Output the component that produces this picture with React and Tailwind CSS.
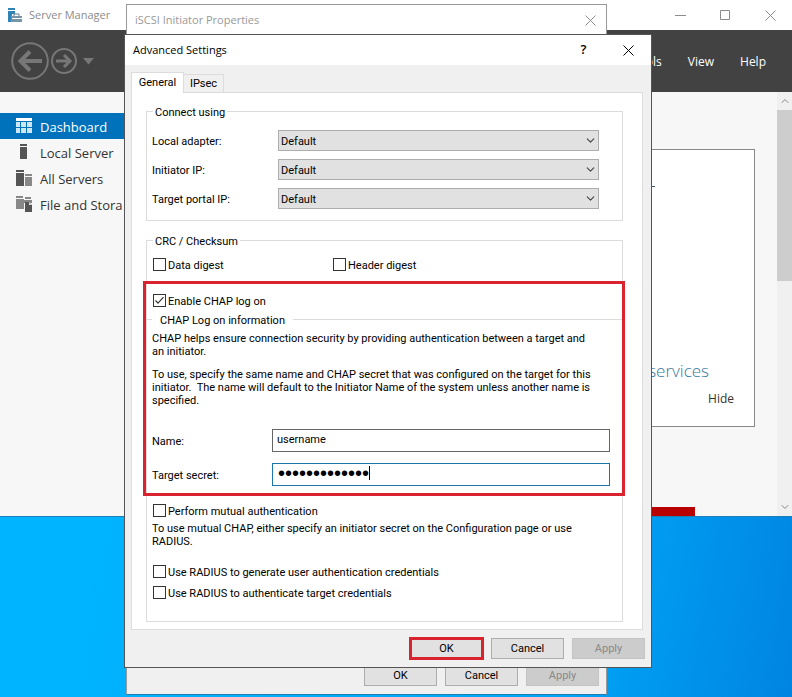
import { useState } from "react";
import { ChevronDown, ChevronUp } from "lucide-react";

// Server Manager navigation icons
const DashboardIcon = () => (
  <svg width="16" height="16" viewBox="0 0 16 16" aria-hidden="true">
    <path d="M0 0h16v3H0z" fill="#ffffff" />
    <path d="M0 4h4v5H0zM5 4h5v5H5zM11 4h5v5h-5zM0 10h4v5H0zM5 10h5v5H5zM11 10h5v5h-5z" fill="#cfe6f5" />
  </svg>
);

const LocalServerIcon = () => (
  <svg width="16" height="16" viewBox="0 0 16 16" fill="#555555" aria-hidden="true">
    <path d="M4 0h7v2H4zM4 3h7v12H4z" />
  </svg>
);

const AllServersIcon = () => (
  <svg width="16" height="16" viewBox="0 0 16 16" aria-hidden="true">
    <path d="M0 0h8v2H0zM0 3h8v13H0z" fill="#555555" />
    <path d="M9 4h7v2H9zM9 7h7v9H9z" fill="#888888" />
  </svg>
);

const StorageIcon = () => (
  <svg width="16" height="16" viewBox="0 0 16 16" aria-hidden="true">
    <path d="M0 0h7v2H0zM0 3h8v10H0zM9 1h6v2H9zM8 4h8v3H8z" fill="#888888" />
    <path d="M9 6h4l3 3v7H9z" fill="#555555" />
    <path d="M13 6v3h3z" fill="#dddddd" />
  </svg>
);

const ServerManagerIcon = () => (
  <svg width="15" height="15" viewBox="0 0 15 15" aria-hidden="true">
    <path d="M0 0h7v2H0zM0 3h7v3H4v8H0z" fill="#2f83b5" />
    <path d="M6 8V6h5v2" fill="none" stroke="#5d7f92" />
    <path d="M3 8h11v2H3zM3 11h11v3H3z" fill="#7795a6" />
  </svg>
);

const navItems = [
  { label: "Dashboard", icon: DashboardIcon, active: true },
  { label: "Local Server", icon: LocalServerIcon },
  { label: "All Servers", icon: AllServersIcon },
  { label: "File and Stora", icon: StorageIcon },
];

const adapters = [
  { id: "local-adapter", label: "Local adapter:" },
  { id: "initiator-ip", label: "Initiator IP:" },
  { id: "target-portal-ip", label: "Target portal IP:" },
];

const ServerManager = () => (
  <main className="w-full border-b border-[#1c7fb5] bg-[#f7f7f7] font-['Open_Sans',sans-serif]">
    {/* Title bar */}
    <header className="flex h-[30px] items-center justify-between bg-white pl-2 text-[#8c8c8c]">
      <div className="flex items-center gap-[6px] text-[11px]">
        <ServerManagerIcon />
        <span>Server Manager</span>
      </div>
      <div className="flex items-center">
        <button aria-label="Minimize" className="flex h-7 w-[45px] items-center justify-center">
          <svg width="11" height="11" stroke="#8c8c8c"><path d="M0 5.500h11" /></svg>
        </button>
        <button aria-label="Maximize" className="flex h-7 w-[45px] items-center justify-center">
          <svg width="11" height="11" fill="none" stroke="#8c8c8c"><path d="M.5.5h9v9h-9z" /></svg>
        </button>
        <button aria-label="Close" className="flex h-7 w-11 items-center justify-center">
          <svg width="11" height="11" stroke="#8c8c8c"><path d="M.5.5l10 10M10.500.5l-10 10" /></svg>
        </button>
      </div>
    </header>

    {/* Toolbar */}
    <div className="flex h-[62px] items-center justify-between bg-[#424242] pr-[26px] pl-[11px] text-white">
      <div className="flex items-center gap-[2px]">
        <button aria-label="Back">
          <svg width="38" height="38" viewBox="0 0 38 38" fill="none" stroke="#777777">
            <circle cx="19" cy="19" r="17.8" strokeWidth="2" />
            <path d="M9 19h22M19 9.500L9.500 19l9.500 9.500" strokeWidth="4" />
          </svg>
        </button>
        <button aria-label="Forward">
          <svg width="26" height="26" viewBox="0 0 26 26" fill="none" stroke="#777777">
            <circle cx="13" cy="13" r="12" strokeWidth="2" />
            <path d="M5 13h15M13 7l6 6-6 6" strokeWidth="3" />
          </svg>
        </button>
        <button aria-label="History" className="ml-1">
          <svg width="11" height="7" fill="#777777"><path d="M0 0h11L5.500 6.500z" /></svg>
        </button>
      </div>
      <nav className="flex gap-[26px] pt-[2px] text-[12px]">
        <button>Tools</button>
        <button>View</button>
        <button>Help</button>
      </nav>
    </div>

    <div className="flex">
      {/* Sidebar */}
      <nav className="w-[124px] shrink-0 pt-[21px] text-[13px] whitespace-nowrap">
        {navItems.map(({ label, icon: Icon, active }) => (
          <a
            key={label}
            href="#"
            className={`flex h-[26px] items-center gap-2 pl-4 ${
              active ? "bg-[#0072bc] text-white" : "text-[#333333]"
            }`}
          >
            <Icon />
            <span className="pt-px leading-5">{label}</span>
          </a>
        ))}
      </nav>

      {/* Dashboard */}
      <section className="flex flex-1 flex-col pt-[57px]">
        <div className="mr-[22px] flex h-[278px] flex-col items-end border border-[#888888] bg-white pt-9 pr-5 pb-[17px]">
          <div className="mr-[79px] h-px w-1 bg-[#3b5566]" />
          <a href="#" className="mt-auto mr-[25px] mb-[6px] text-[17px] leading-6 font-light text-[#3579a3]">services</a>
          <button className="text-[12px] leading-5 text-[#333333]">Hide</button>
        </div>
        <div className="mt-20 mr-[82px] h-[9px] bg-[#b80000]" />
      </section>

      {/* Scrollbar */}
      <div className="flex w-[15px] shrink-0 flex-col items-center bg-[#f0f0f0] text-[#888888]">
        <ChevronUp size={12} className="my-[3px]" />
        <div className="h-[171px] w-full bg-[#cdcdcd]" />
        <ChevronDown size={12} className="mt-auto mb-[3px]" />
      </div>
    </div>
  </main>
);

const DialogButton = ({ children, disabled, highlight }) => (
  <button
    disabled={disabled}
    className={`h-[21px] w-[73px] border pt-px text-[11px] leading-[18px] ${
      disabled ? "border-[#c4c4c4] bg-[#cccccc] text-[#888888]" : "border-[#adadad] bg-[#e1e1e1] text-black"
    } ${highlight ? "outline-3 -outline-offset-2 outline-[#d9232e]" : ""}`}
  >
    {children}
  </button>
);

const Checkbox = ({ label, defaultChecked }) => (
  <label className="flex h-[13px] items-center gap-[2px] leading-[13px]">
    <span className="relative flex">
      <input
        type="checkbox"
        defaultChecked={defaultChecked}
        className="peer size-[13px] appearance-none border border-[#333333] bg-white"
      />
      <svg viewBox="0 0 13 13" className="pointer-events-none absolute inset-0 hidden size-[13px] peer-checked:block" fill="none" stroke="#333333" strokeWidth="1.200">
        <path d="M2.500 6.500L5 9.200l5.500-6" />
      </svg>
    </span>
    <span className="pt-px">{label}</span>
  </label>
);

const AdvancedSettings = () => {
  const [activeTab, setActiveTab] = useState("general");

  return (
    <section className="absolute top-[34px] left-[124px] w-[528px] border border-[#555555] bg-[#f0f0f0] pb-2 text-black">
      <header className="flex h-[30px] items-center bg-white pl-2 font-['Open_Sans',sans-serif] text-[11px]">
        <h1 className="flex-1">Advanced Settings</h1>
        <button aria-label="Help" className="w-[45px] text-[13px] font-semibold">?</button>
        <button aria-label="Close" className="flex w-[45px] justify-center">
          <svg width="11" height="11" stroke="black"><path d="M.5.5l10 10M10.500.5l-10 10" /></svg>
        </button>
      </header>

      <div className="px-[6px] pt-[7px] text-[11px] leading-[13px]">
        {/* Tabs */}
        <div className="flex items-end">
          <button
            onClick={() => setActiveTab("general")}
            className={`relative z-10 -mb-px h-[21px] w-[53px] border border-b-0 border-[#dcdcdc] pb-[2px] ${activeTab === "general" ? "bg-white" : "bg-[#f0f0f0]"}`}
          >
            General
          </button>
          <button
            onClick={() => setActiveTab("ipsec")}
            className={`h-[18px] w-10 border border-b-0 border-l-0 border-[#dcdcdc] ${activeTab === "ipsec" ? "bg-white" : "bg-[#f0f0f0]"}`}
          >
            IPsec
          </button>
        </div>

        <div className="relative mr-[2px] border border-[#dcdcdc] bg-white pt-[11px] pr-[19px] pb-[7px] pl-[14px]">
          <fieldset className="flex flex-col gap-2 border border-[#dcdcdc] pt-[11px] pr-[23px] pb-[11px] pl-[5px]">
            <legend className="ml-[1px] px-[2px] pt-[2px] leading-[13px]">Connect using</legend>
            {adapters.map((adapter) => (
              <div key={adapter.id} className="flex items-center">
                <label htmlFor={adapter.id} className="w-[126px] pt-[2px]">{adapter.label}</label>
                <div className="relative flex-1">
                  <select id={adapter.id} className="block h-[21px] w-full appearance-none border border-[#adadad] bg-[#e1e1e1] px-[2px] pt-px">
                    <option>Default</option>
                  </select>
                  <ChevronDown size={13} className="pointer-events-none absolute top-1 right-[2px] text-[#444444]" />
                </div>
              </div>
            ))}
          </fieldset>

          <fieldset className="mt-3 border border-[#dcdcdc] pt-[10px] pb-[22px]">
            <legend className="ml-[6px] px-[2px] pt-[2px] leading-[13px]">CRC / Checksum</legend>
            <div className="flex pl-[6px]">
              <div className="w-[180px]"><Checkbox label="Data digest" /></div>
              <Checkbox label="Header digest" />
            </div>
            <div className="mt-[23px] pl-[6px]">
              <Checkbox label="Enable CHAP log on" defaultChecked />
            </div>

            <fieldset className="mt-[5px] border-t border-[#dcdcdc] pt-[5px] pr-3 pl-[5px]">
              <legend className="px-2 pt-[2px] leading-[13px]">CHAP Log on information</legend>
              <p className="whitespace-nowrap">
                CHAP helps ensure connection security by providing authentication between a target and
                <br />
                an initiator.
              </p>
              <p className="mt-[10px] whitespace-nowrap">
                To use, specify the same name and CHAP secret that was configured on the target for this
                <br />
                initiator.&nbsp; The name will default to the Initiator Name of the system unless another name is
                <br />
                specified.
              </p>

              <div className="mt-[22px] flex items-center">
                <label htmlFor="chap-name" className="w-[120px] pt-[2px]">Name:</label>
                <input id="chap-name" defaultValue="username" className="h-[23px] min-w-0 flex-1 border border-[#666666] px-1 pb-[2px]" />
              </div>
              <div className="mt-[11px] flex items-center">
                <label htmlFor="chap-secret" className="w-[120px] pt-[2px]">Target secret:</label>
                <div className="relative flex-1">
                  <input
                    id="chap-secret"
                    type="password"
                    defaultValue="targetsecret1"
                    className="block h-[23px] w-full border border-[#1c76ab] px-[5px] pb-[2px] font-['Liberation_Sans',sans-serif] text-[20px]"
                  />
                  <span className="absolute top-[3px] left-[97px] h-[14px] w-px bg-black" />
                </div>
              </div>

              <div className="mt-[18px] pl-px">
                <Checkbox label="Perform mutual authentication" />
              </div>
              <p className="mt-[5px] whitespace-nowrap">
                To use mutual CHAP, either specify an initiator secret on the Configuration page or use
                <br />
                RADIUS.
              </p>
              <div className="mt-[17px] flex flex-col gap-2 pl-px">
                <Checkbox label="Use RADIUS to generate user authentication credentials" />
                <Checkbox label="Use RADIUS to authenticate target credentials" />
              </div>
            </fieldset>
          </fieldset>

          {/* Highlight around the CHAP credentials */}
          <div className="pointer-events-none absolute top-[188px] right-[17px] left-[11px] h-[215px] border-3 border-[#d9232e]" />
        </div>

        <div className="mt-2 flex justify-end gap-2">
          <DialogButton highlight>OK</DialogButton>
          <DialogButton>Cancel</DialogButton>
          <DialogButton disabled>Apply</DialogButton>
        </div>
      </div>
    </section>
  );
};

const InitiatorProperties = () => (
  <section className="absolute top-1 left-[126px] flex h-[691px] w-[481px] flex-col justify-between border border-[#999999] border-b-[#1c7fb5] bg-[#f0f0f0] pb-2">
    <header className="flex h-[30px] items-center justify-between bg-white pr-[10px] pl-2 font-['Open_Sans',sans-serif] text-[11px] text-[#999999]">
      <h2>iSCSI Initiator Properties</h2>
      <button aria-label="Close">
        <svg width="11" height="11" stroke="#8c8c8c"><path d="M.5.5l10 10M10.500.5l-10 10" /></svg>
      </button>
    </header>
    <div className="flex justify-end gap-2 pr-[7px]">
      <DialogButton>OK</DialogButton>
      <DialogButton>Cancel</DialogButton>
      <DialogButton disabled>Apply</DialogButton>
    </div>
  </section>
);

export default function App() {
  return (
    <div className="relative min-h-screen overflow-hidden bg-linear-100 from-[#00b4ff] from-20% via-[#00a4f6] via-75% to-[#0084e2] font-['Roboto',sans-serif]">
      <ServerManager />
      <InitiatorProperties />
      <AdvancedSettings />
    </div>
  );
}
